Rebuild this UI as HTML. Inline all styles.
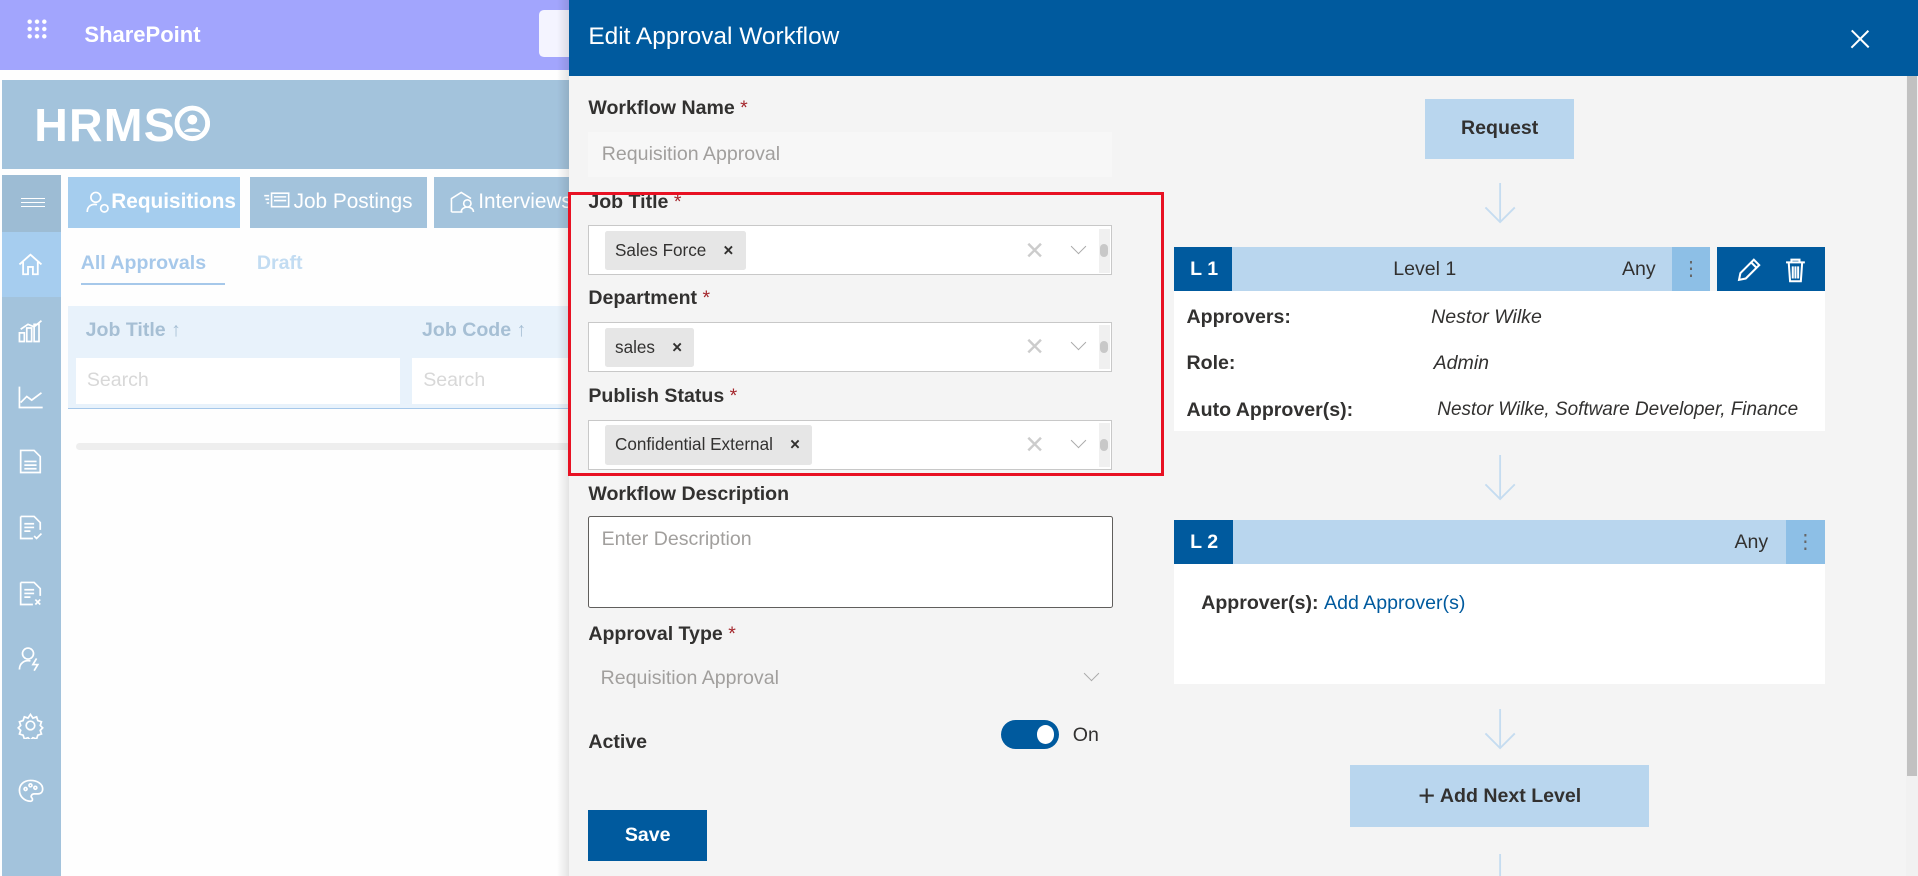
<!DOCTYPE html>
<html><head><meta charset="utf-8"><style>
*{box-sizing:border-box;margin:0;padding:0}
html,body{width:1918px;height:876px;overflow:hidden}
body{font-family:"Liberation Sans",sans-serif;background:#fff}
#r{zoom:1.22321;position:relative;width:1568px;height:716px;overflow:hidden;background:#fefefe}
.a{position:absolute}
.lbl{position:absolute;left:16px;font-size:16px;font-weight:bold;color:#323130}
.lbl i{color:#a4262c;font-style:normal;font-weight:normal}
.sel{position:absolute;left:16px;width:428px;height:41px;background:#fff;border:1px solid #c8c8c8}
.chip{position:absolute;left:13px;top:4px;height:32px;background:#e6e6e6;border-radius:2px;font-size:14px;color:#323130;line-height:32px;padding:0 10px 0 8px}
.chip b{margin-left:14px;font-size:14px}
.clr{position:absolute;right:54px;top:8px;font-size:20px;color:#ccc}
.chev{position:absolute;right:22px;top:12px;width:9px;height:9px;border-right:1.5px solid #aaa;border-bottom:1.5px solid #aaa;transform:rotate(45deg)}
.sb{position:absolute;right:1px;top:2px;width:9px;height:36px;background:#f0f0f0}
.sb:after{content:"";position:absolute;left:1px;top:13px;width:7px;height:10px;border-radius:4px;background:#c8c8c8}
.arr{position:absolute;left:1212px}
.si{position:absolute;left:14px}
</style></head><body><div id="r">
<div class="a" style="left:0;top:0;width:1568px;height:57px;background:#a2a5fd"></div>
<div class="a" style="left:21px;top:15px;width:18px;height:18px;background:radial-gradient(circle,#fff 1.6px,transparent 2px) 0 0/6px 6px"></div>
<div class="a" style="left:69px;top:18px;font-size:18px;font-weight:bold;color:#fff">SharePoint</div>
<div class="a" style="left:441px;top:8px;width:40px;height:39px;background:#f4f4ff;border-radius:4px"></div>
<div class="a" style="left:2px;top:65px;width:470px;height:73px;background:#a3c3dc"></div>
<div class="a" style="left:28px;top:80px;font-size:38px;font-weight:bold;color:#fff;letter-spacing:1px">HRMS</div>
<svg class="a" style="left:142px;top:86px" width="30" height="30" viewBox="0 0 30 30"><circle cx="15" cy="15" r="12.5" fill="none" stroke="#fff" stroke-width="4"/><circle cx="15" cy="12" r="4" fill="#fff"/><path d="M8 22c2-4 12-4 14 0" fill="#fff"/></svg>
<div class="a" style="left:2px;top:143px;width:48px;height:573px;background:#a3c3dc"></div>
<div class="a" style="left:2px;top:143px;width:48px;height:47px;background:#9dbcd4"></div>
<div class="a" style="left:17px;top:162px;width:20px;height:7px;border-top:1px solid #fff;border-bottom:1px solid #fff"></div>
<div class="a" style="left:17px;top:165px;width:20px;height:1px;background:#fff"></div>
<div class="a" style="left:2px;top:190px;width:48px;height:53px;background:#a6cdef"></div>
<svg class="si" style="top:205px" width="22" height="22" viewBox="0 0 22 22" fill="none" stroke="#fff" stroke-width="1.5"><path d="M2 11L11 3l9 8M5 9v10h4v-6h4v6h4V9"/></svg>
<svg class="si" style="top:259px" width="22" height="22" viewBox="0 0 22 22" fill="none" stroke="#fff" stroke-width="1.4"><path d="M2 20h4v-7H2zM8 20h4V9H8zM14 20h4V6h-4zM3 10l6-4 5 2 6-5"/></svg>
<svg class="si" style="top:313px" width="22" height="22" viewBox="0 0 22 22" fill="none" stroke="#fff" stroke-width="1.4"><path d="M2 3v17h19M3 16l5-5 4 3 8-6"/></svg>
<svg class="si" style="top:366px" width="22" height="22" viewBox="0 0 22 22" fill="none" stroke="#fff" stroke-width="1.4"><path d="M3 2h11l5 5v13H3zM6 11h10M6 14h10M6 17h10"/></svg>
<svg class="si" style="top:420px" width="22" height="22" viewBox="0 0 22 22" fill="none" stroke="#fff" stroke-width="1.4"><path d="M3 2h11l5 5v6M3 2v18h10M6 8h8M6 11h8M6 14h5M14 18l2 2 4-4"/></svg>
<svg class="si" style="top:474px" width="22" height="22" viewBox="0 0 22 22" fill="none" stroke="#fff" stroke-width="1.4"><path d="M3 2h11l5 5v6M3 2v18h10M6 8h8M6 11h8M6 14h5M15 16l4 4M19 16l-4 4"/></svg>
<svg class="si" style="top:527px" width="22" height="22" viewBox="0 0 22 22" fill="none" stroke="#fff" stroke-width="1.4"><circle cx="9" cy="7" r="4.5"/><path d="M2 20c0-5 4-8 9-7M16 11l-3 5h4l-3 5"/></svg>
<svg class="si" style="top:582px" width="22" height="22" viewBox="0 0 22 22" fill="none" stroke="#fff" stroke-width="1.4"><circle cx="11" cy="11" r="3.5"/><path d="M11 2l2 3 3-1 1 3 3 1-1 3 2 2-2 2 1 3-3 1-1 3-3-1-2 2-2-2-3 1-1-3-3-1 1-3-2-2 2-2-1-3 3-1 1-3 3 1z"/></svg>
<svg class="si" style="top:636px" width="22" height="22" viewBox="0 0 22 22" fill="none" stroke="#fff" stroke-width="1.4"><path d="M11 2C5 2 2 6 2 10c0 5 4 9 9 9 2 0 2-2 1-3s0-3 2-3h3c3 0 4-2 4-4 0-4-4-7-10-7z"/><circle cx="7" cy="9" r="1.2"/><circle cx="11" cy="6" r="1.2"/><circle cx="15" cy="8" r="1.2"/></svg>
<div class="a" style="left:56px;top:145px;width:140px;height:41px;background:#a5cdee;color:#fff;font-size:17px;font-weight:bold;line-height:41px;padding-left:35px">Requisitions</div>
<svg class="a" style="left:70px;top:155px" width="20" height="20" viewBox="0 0 20 20" fill="none" stroke="#fff" stroke-width="1.4"><circle cx="8" cy="6" r="4"/><path d="M1 18c0-5 4-7 8-6"/><circle cx="15" cy="15" r="3"/></svg>
<div class="a" style="left:204px;top:145px;width:145px;height:41px;background:#a3c3dc;color:#fff;font-size:17px;line-height:41px;padding-left:36px">Job Postings</div>
<svg class="a" style="left:215px;top:157px" width="22" height="14" viewBox="0 0 22 14" fill="none" stroke="#fff" stroke-width="1.3"><path d="M7 1h14v11H7zM9 4h10M9 7h10M1 3h4M2 6h3M3 9h2"/></svg>
<div class="a" style="left:355px;top:145px;width:120px;height:41px;background:#a3c3dc;color:#fff;font-size:17px;line-height:41px;padding-left:36px">Interviews</div>
<svg class="a" style="left:367px;top:155px" width="22" height="20" viewBox="0 0 22 20" fill="none" stroke="#fff" stroke-width="1.3"><path d="M2 18V7l8-5 8 5M2 18h9"/><circle cx="15" cy="11" r="3"/><path d="M10 18c0-3 3-4 5-4s5 1 5 4"/></svg>
<div class="a" style="left:66px;top:206px;font-size:16px;font-weight:bold;color:#a6c8ea">All Approvals</div>
<div class="a" style="left:66px;top:231px;width:118px;height:2px;background:#a6c8ea"></div>
<div class="a" style="left:210px;top:206px;font-size:16px;font-weight:bold;color:#c2dcf2">Draft</div>
<div class="a" style="left:56px;top:250px;width:420px;height:84px;background:#e8f2fb;border-bottom:1px solid #a6c8ea"></div>
<div class="a" style="left:70px;top:261px;font-size:16px;font-weight:bold;color:#a6bfd4">Job Title ↑</div>
<div class="a" style="left:345px;top:261px;font-size:16px;font-weight:bold;color:#a6bfd4">Job Code ↑</div>
<div class="a" style="left:62px;top:293px;width:265px;height:37px;background:#fff;color:#d8d8d8;font-size:16px;line-height:37px;padding-left:9px">Search</div>
<div class="a" style="left:337px;top:293px;width:140px;height:37px;background:#fff;color:#d8d8d8;font-size:16px;line-height:37px;padding-left:9px">Search</div>
<div class="a" style="left:62px;top:362px;width:410px;height:6px;background:#eee;border-radius:3px"></div>
<div class="a" style="left:455px;top:0;width:12px;height:716px;background:linear-gradient(to right,rgba(0,0,0,0),rgba(0,0,0,.12))"></div>
<div class="a" style="left:465px;top:0;width:1103px;height:716px;background:#f4f4f4">
 <div class="a" style="left:0;top:0;width:1103px;height:62px;background:#005a9e"></div>
 <div class="a" style="left:16px;top:19px;font-size:20px;color:#fff">Edit Approval Workflow</div>
 <div class="a" style="left:1046px;top:31px;width:20px;height:2px;background:#fff;transform:rotate(45deg)"></div>
 <div class="a" style="left:1046px;top:31px;width:20px;height:2px;background:#fff;transform:rotate(-45deg)"></div>
 <div class="a" style="left:1093px;top:62px;width:10px;height:654px;background:#f1f1f1"></div>
 <div class="a" style="left:1094px;top:62px;width:8px;height:572px;background:#c1c1c1"></div>
 <div class="lbl" style="top:79px">Workflow Name <i>*</i></div>
 <div class="a" style="left:16px;top:108px;width:428px;height:37px;background:#f7f7f7;color:#a19f9d;font-size:16px;line-height:37px;padding-left:11px">Requisition Approval</div>
 <div class="lbl" style="top:156px">Job Title <i>*</i></div>
 <div class="sel" style="top:184px"><div class="chip">Sales Force<b>×</b></div><div class="clr">✕</div><div class="chev"></div><div class="sb"></div></div>
 <div class="lbl" style="top:235px">Department <i>*</i></div>
 <div class="sel" style="top:263px"><div class="chip">sales<b>×</b></div><div class="clr">✕</div><div class="chev"></div><div class="sb"></div></div>
 <div class="lbl" style="top:315px">Publish Status <i>*</i></div>
 <div class="sel" style="top:343px"><div class="chip">Confidential External<b>×</b></div><div class="clr">✕</div><div class="chev"></div><div class="sb"></div></div>
 <div class="a" style="left:-1px;top:157px;width:488px;height:232px;border:3px solid #e81123"></div>
 <div class="lbl" style="top:395px">Workflow Description</div>
 <div class="a" style="left:16px;top:422px;width:429px;height:75px;background:#fff;border:1px solid #605e5c;border-radius:2px;color:#a19f9d;font-size:16px;padding:9px 10px">Enter Description</div>
 <div class="lbl" style="top:509px">Approval Type <i>*</i></div>
 <div class="a" style="left:26px;top:545px;font-size:16px;color:#a19f9d">Requisition Approval</div>
 <div class="a" style="left:423px;top:546px;width:9px;height:9px;border-right:1px solid #aaa;border-bottom:1px solid #aaa;transform:rotate(45deg)"></div>
 <div class="lbl" style="top:598px;font-weight:bold">Active</div>
 <div class="a" style="left:353px;top:589px;width:48px;height:23px;background:#005a9e;border-radius:12px"></div>
 <div class="a" style="left:383px;top:593px;width:14px;height:15px;background:#fff;border-radius:50%"></div>
 <div class="a" style="left:412px;top:592px;font-size:16px;color:#323130">On</div>
 <div class="a" style="left:16px;top:662px;width:97px;height:42px;background:#005a9e;color:#fff;font-size:16px;font-weight:bold;text-align:center;line-height:42px">Save</div>
</div>
<div class="a" style="left:1165px;top:81px;width:122px;height:49px;background:#b9d6ee;font-size:16px;color:#323130;text-align:center;line-height:49px;font-weight:bold">Request</div>
<svg class="arr" style="top:150px" width="28" height="34" viewBox="0 0 28 34" fill="none" stroke="#c5dcf0" stroke-width="1.5"><path d="M14 0v32M2 20l12 12 12-12"/></svg>
<div class="a" style="left:960px;top:202px;width:532px;height:36px;background:#b9d6ee"></div>
<div class="a" style="left:960px;top:202px;width:47px;height:36px;background:#005a9e;color:#fff;font-size:16px;font-weight:bold;line-height:36px;padding-left:13px">L 1</div>
<div class="a" style="left:1139px;top:211px;font-size:16px;color:#323130">Level 1</div>
<div class="a" style="left:1326px;top:211px;font-size:16px;color:#323130">Any</div>
<div class="a" style="left:1367px;top:202px;width:31px;height:36px;background:#8dbfe6;color:#666;text-align:center;line-height:36px">⋮</div>
<div class="a" style="left:1398px;top:202px;width:6px;height:36px;background:#f4f4f4"></div>
<div class="a" style="left:1404px;top:202px;width:88px;height:36px;background:#005a9e"></div>
<svg class="a" style="left:1418px;top:210px" width="22" height="22" viewBox="0 0 20 20"><path d="M3 17l1-5L14 2l4 4L8 16z M12 4l4 4" fill="none" stroke="#fff" stroke-width="1.5"/></svg>
<svg class="a" style="left:1457px;top:210px" width="22" height="22" viewBox="0 0 20 20"><path d="M3 4h14M7 4V2h6v2M5 4l1 14h8l1-14M8 7v9M10 7v9M12 7v9" fill="none" stroke="#fff" stroke-width="1.5"/></svg>
<div class="a" style="left:960px;top:238px;width:532px;height:114px;background:#fff;font-size:16px;color:#323130">
 <div class="a" style="left:10px;top:12px;font-weight:bold">Approvers:</div><div class="a" style="left:210px;top:12px;font-style:italic">Nestor Wilke</div>
 <div class="a" style="left:10px;top:50px;font-weight:bold">Role:</div><div class="a" style="left:212px;top:50px;font-style:italic">Admin</div>
 <div class="a" style="left:10px;top:88px;font-weight:bold">Auto Approver(s):</div><div class="a" style="left:215px;top:88px;font-style:italic;white-space:nowrap;font-size:15.5px">Nestor Wilke, Software Developer, Finance</div>
</div>
<svg class="arr" style="top:372px" width="28" height="38" viewBox="0 0 28 38" fill="none" stroke="#c5dcf0" stroke-width="1.5"><path d="M14 0v36M2 24l12 12 12-12"/></svg>
<div class="a" style="left:960px;top:425px;width:532px;height:36px;background:#b9d6ee"></div>
<div class="a" style="left:960px;top:425px;width:48px;height:36px;background:#005a9e;color:#fff;font-size:16px;font-weight:bold;line-height:36px;padding-left:13px">L 2</div>
<div class="a" style="left:1418px;top:434px;font-size:16px;color:#323130">Any</div>
<div class="a" style="left:1460px;top:425px;width:32px;height:36px;background:#8dbfe6;color:#666;text-align:center;line-height:36px">⋮</div>
<div class="a" style="left:960px;top:461px;width:532px;height:98px;background:#fff"></div>
<div class="a" style="left:982px;top:484px;font-size:16px;color:#323130;font-weight:bold">Approver(s): <span style="color:#005a9e;font-weight:normal">Add Approver(s)</span></div>
<svg class="arr" style="top:580px" width="28" height="34" viewBox="0 0 28 34" fill="none" stroke="#c5dcf0" stroke-width="1.5"><path d="M14 0v32M2 20l12 12 12-12"/></svg>
<div class="a" style="left:1104px;top:625px;width:244px;height:51px;background:#b9d6ee;font-size:16px;font-weight:bold;color:#323130;text-align:center;line-height:51px"><span style="font-size:24px;font-weight:normal;vertical-align:-3px">+</span> Add Next Level</div>
<svg class="arr" style="top:698px" width="28" height="34" viewBox="0 0 28 34" fill="none" stroke="#c5dcf0" stroke-width="1.5"><path d="M14 0v32M2 20l12 12 12-12"/></svg>
</div></body></html>
